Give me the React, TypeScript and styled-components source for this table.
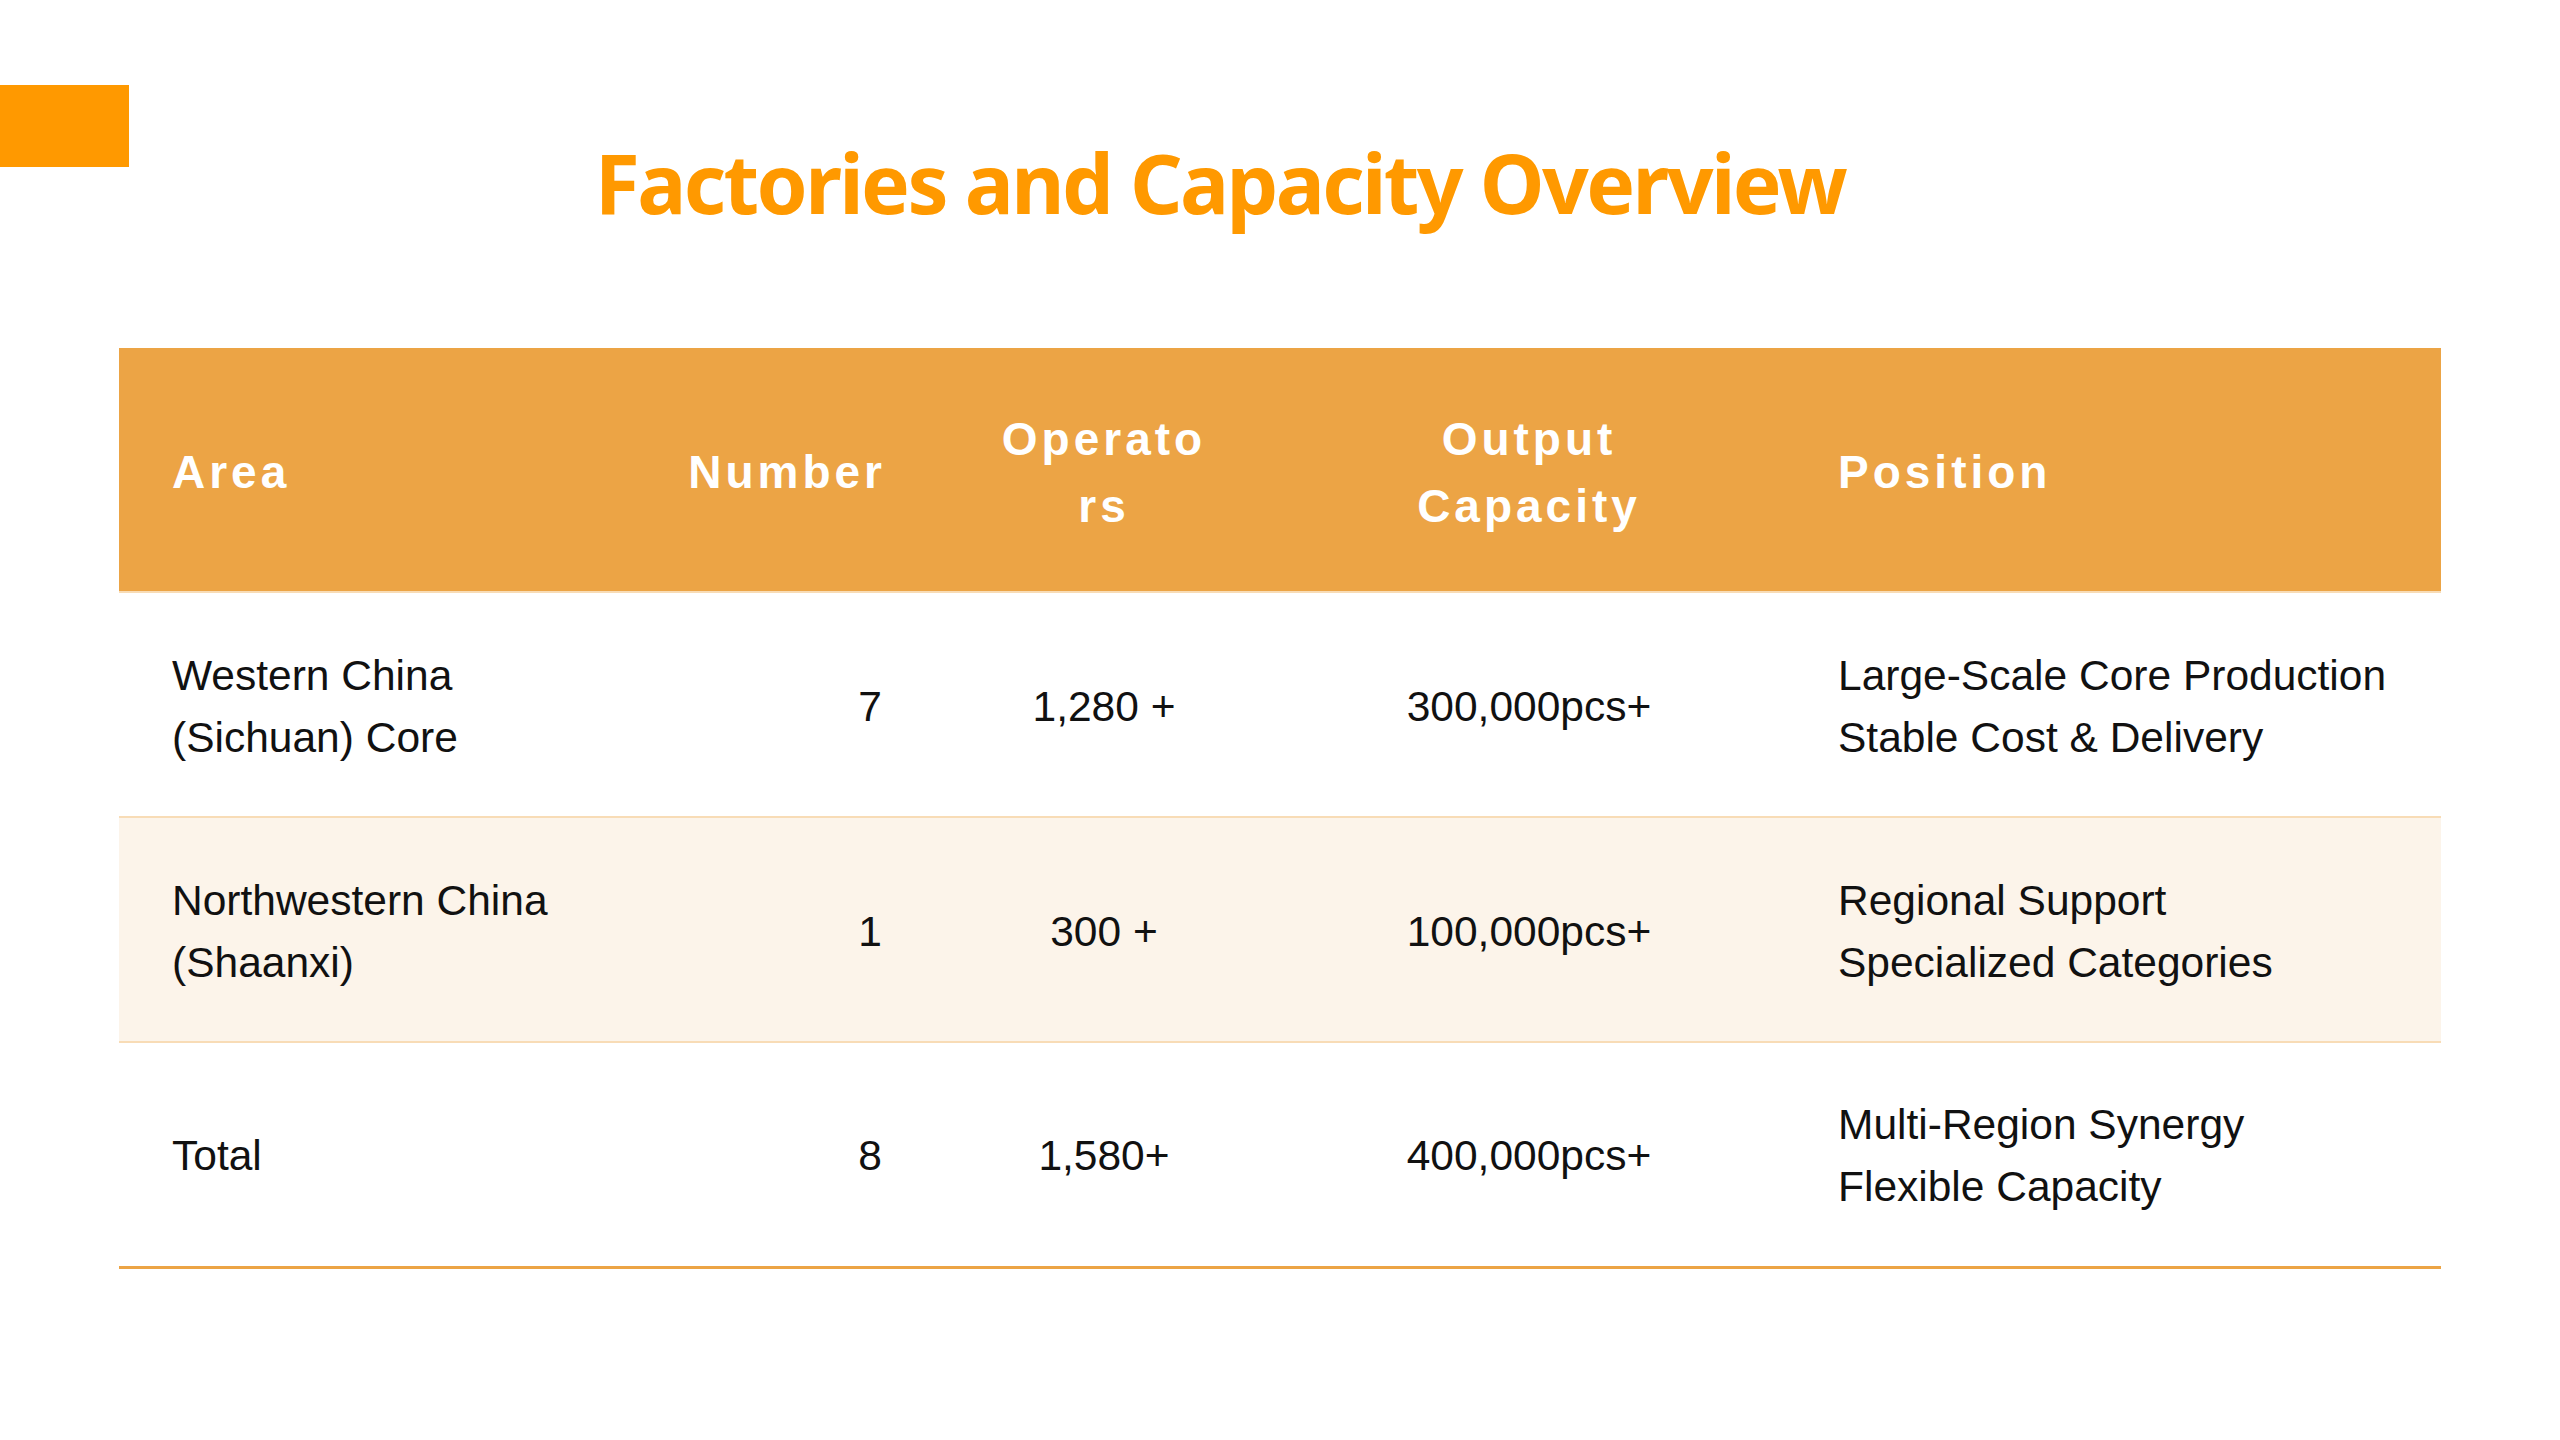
import React from 'react';
import styled, { createGlobalStyle } from 'styled-components';

const GlobalStyle = createGlobalStyle`
  html, body {
    margin: 0;
    padding: 0;
    background: #ffffff;
  }
  body {
    font-family: 'Liberation Sans', Arial, sans-serif;
  }
`;

const Page = styled.div`
  width: 2560px;
  height: 1440px;
  background: #ffffff;
  overflow: hidden;
`;

const TopRow = styled.div`
  display: flex;
  align-items: flex-start;
`;

const Accent = styled.div`
  width: 129px;
  height: 82px;
  margin-top: 85px;
  background: #ff9900;
  flex-shrink: 0;
`;

const Title = styled.h1`
  flex: 1;
  margin: 132px 0 0;
  padding-right: 249px;
  height: 100px;
  line-height: 100px;
  text-align: center;
  font-family: 'Noto Sans', 'Open Sans', sans-serif;
  font-weight: 700;
  font-size: 82px;
  letter-spacing: -2.6px;
  color: #ff9900;
  white-space: nowrap;
`;

const Table = styled.table`
  margin: 116px 0 0 119px;
  width: 2322px;
  border-collapse: collapse;
  table-layout: fixed;
`;

const HeadCell = styled.th<{ $align: string; $w: number; $pad?: number; $breakAll?: boolean }>`
  width: ${p => p.$w}px;
  height: 244px;
  padding: 6px ${p => p.$pad ?? 53}px 0;
  background: #eca445;
  border-bottom: 2px solid #f8dcb6;
  color: #ffffff;
  font-family: 'Liberation Sans', Arial, sans-serif;
  font-weight: 700;
  font-size: 46px;
  line-height: 67px;
  letter-spacing: 4px;
  text-align: ${p => p.$align};
  vertical-align: middle;
  word-break: ${p => (p.$breakAll ? 'break-all' : 'normal')};
  box-sizing: border-box;
`;

const Row = styled.tr<{ $shade?: boolean; $last?: boolean }>`
  background: ${p => (p.$shade ? '#fcf4ea' : '#ffffff')};
  border-bottom: ${p => (p.$last ? '3px solid #eca445' : '2px solid #f8dcb6')};
`;

const Cell = styled.td<{ $align: string }>`
  height: 225px;
  padding: 4px 53px 0;
  color: #111111;
  font-family: 'Liberation Sans', Arial, sans-serif;
  font-size: 42.5px;
  line-height: 62px;
  text-align: ${p => p.$align};
  vertical-align: middle;
  box-sizing: border-box;
`;

const rows = [
  {
    area: 'Western China (Sichuan) Core',
    number: '7',
    operators: '1,280 +',
    output: '300,000pcs+',
    position: ['Large-Scale Core Production', 'Stable Cost & Delivery'],
  },
  {
    area: 'Northwestern China (Shaanxi)',
    number: '1',
    operators: '300 +',
    output: '100,000pcs+',
    position: ['Regional Support', 'Specialized Categories'],
  },
  {
    area: 'Total',
    number: '8',
    operators: '1,580+',
    output: '400,000pcs+',
    position: ['Multi-Region Synergy', 'Flexible Capacity'],
  },
];

export default function App() {
  return (
    <Page>
      <GlobalStyle />
      <TopRow>
        <Accent />
        <Title>Factories and Capacity Overview</Title>
      </TopRow>
      <Table>
        <thead>
          <tr>
            <HeadCell $align="left" $w={500}>Area</HeadCell>
            <HeadCell $align="right" $w={316} $pad={49}>Number</HeadCell>
            <HeadCell $align="center" $w={338} $pad={60} $breakAll>Operators</HeadCell>
            <HeadCell $align="center" $w={512} $pad={60}>Output Capacity</HeadCell>
            <HeadCell $align="left" $w={656}>Position</HeadCell>
          </tr>
        </thead>
        <tbody>
          {rows.map((r, i) => (
            <Row key={r.area} $shade={i === 1} $last={i === rows.length - 1}>
              <Cell $align="left">{r.area}</Cell>
              <Cell $align="right">{r.number}</Cell>
              <Cell $align="center">{r.operators}</Cell>
              <Cell $align="center">{r.output}</Cell>
              <Cell $align="left">
                {r.position[0]}
                <br />
                {r.position[1]}
              </Cell>
            </Row>
          ))}
        </tbody>
      </Table>
    </Page>
  );
}
